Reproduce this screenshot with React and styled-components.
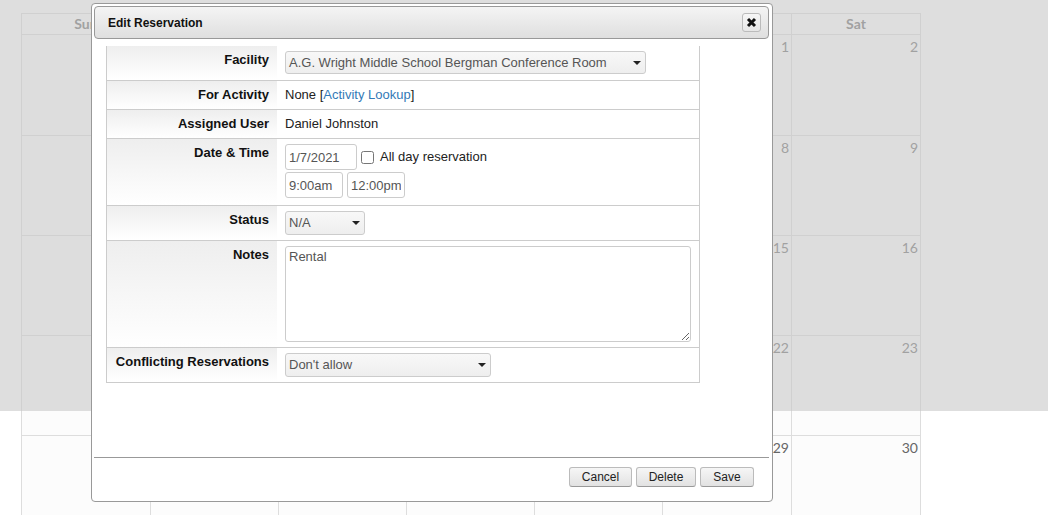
import React from "react";
import styled, { createGlobalStyle } from "styled-components";

const GlobalStyle = createGlobalStyle`
  html, body {
    margin: 0;
    height: 100%;
    overflow: hidden;
    background: #fff;
  }
`;

const Page = styled.div`
  position: relative;
  height: 515px;
  padding: 13px 0 0 21px;
  box-sizing: border-box;
  overflow: hidden;
  font-family: Lato, "Liberation Sans", sans-serif;
`;

const Calendar = styled.div`
  display: grid;
  grid-template-columns: 129px 128px 128px 128px 128px 129px 129px;
  grid-template-rows: 21px 101px;
  grid-auto-rows: 100px;
  width: 900px;
  border-top: 1px solid #ddd;
  border-left: 1px solid #ddd;
  box-sizing: border-box;
`;

const DayName = styled.div`
  line-height: 20px;
  text-align: center;
  font-size: 14px;
  font-weight: 700;
  color: #666;
  border-right: 1px solid #ddd;
  border-bottom: 1px solid #ddd;
`;

const Day = styled.div`
  padding: 3px 2px 0 0;
  text-align: right;
  font-size: 14px;
  line-height: 18px;
  color: #666;
  background: #fcfcfc;
  border-right: 1px solid #ddd;
  border-bottom: 1px solid #ddd;
`;

const Overlay = styled.div`
  position: absolute;
  top: 0;
  left: 0;
  width: 100%;
  height: 411px;
  background: rgba(200, 200, 200, 0.6);
`;

const Dialog = styled.div`
  position: absolute;
  top: 3px;
  left: 91px;
  width: 682px;
  height: 499px;
  box-sizing: border-box;
  padding: 2px 3px 2px 2px;
  display: flex;
  flex-direction: column;
  background: #fff;
  border: 1px solid #999;
  border-radius: 4px;
  font-family: "Liberation Sans", Arial, sans-serif;
`;

const TitleBar = styled.div`
  flex: none;
  height: 33px;
  box-sizing: border-box;
  display: flex;
  align-items: center;
  justify-content: space-between;
  padding: 0 7px 0 13px;
  border: 1px solid #999;
  border-radius: 4px;
  background: linear-gradient(#f4f4f4, #dfdfdf);
`;

const Title = styled.span`
  font-size: 12px;
  font-weight: 700;
  color: #111;
`;

const CloseButton = styled.button`
  width: 19px;
  height: 19px;
  padding: 0;
  display: flex;
  align-items: center;
  justify-content: center;
  background: linear-gradient(#f6f6f6, #e6e6e6);
  border: 1px solid #bbb;
  border-radius: 3px;
`;

const Content = styled.div`
  flex: 1;
  min-height: 0;
  padding: 7px 0 0 12px;
  overflow: hidden;
`;

const FormTable = styled.div`
  width: 594px;
  box-sizing: border-box;
  border-left: 1px solid #ccc;
  border-right: 1px solid #ccc;
  border-bottom: 1px solid #ccc;
`;

const Row = styled.div`
  display: grid;
  grid-template-columns: 170px 1fr;
  border-bottom: 1px solid #ccc;
  &:last-child {
    border-bottom: 0;
  }
`;

const Label = styled.div`
  padding: 6px 8px 0 0;
  text-align: right;
  font-size: 13px;
  line-height: 15px;
  font-weight: 700;
  color: #111;
  background: linear-gradient(#eee, #fff);
`;

const Field = styled.div`
  padding: ${(p) => p.$pad || "6px 8px"};
  font-size: 13px;
  line-height: 16px;
  color: #222;
`;

const Select = styled.div`
  width: ${(p) => p.$w}px;
  height: ${(p) => p.$h || 24}px;
  box-sizing: border-box;
  padding: 0 4px 0 3px;
  display: flex;
  align-items: center;
  justify-content: space-between;
  font-size: 13px;
  color: #555;
  background: linear-gradient(#f8f8f8, #eee);
  border: 1px solid #ccc;
  border-radius: 3px;
`;

const Caret = styled.span`
  width: 0;
  height: 0;
  border-left: 4px solid transparent;
  border-right: 4px solid transparent;
  border-top: 4px solid #222;
`;

const InputRow = styled.div`
  display: flex;
  align-items: center;
  gap: 4px;
  & + & {
    margin-top: 2px;
  }
`;

const Input = styled.input`
  width: ${(p) => p.$w}px;
  height: 26px;
  box-sizing: border-box;
  padding: 0 3px;
  font: 13px "Liberation Sans", Arial, sans-serif;
  color: #555;
  background: #fff;
  border: 1px solid #ccc;
  border-radius: 3px;
`;

const Check = styled.input`
  width: 13px;
  height: 13px;
  margin: 0;
`;

const CheckLabel = styled.span`
  font-size: 13px;
  color: #222;
  margin-left: 2px;
`;

const Notes = styled.textarea`
  display: block;
  width: 406px;
  height: 96px;
  box-sizing: border-box;
  padding: 2px 3px;
  font: 13px "Liberation Sans", Arial, sans-serif;
  color: #555;
  border: 1px solid #ccc;
  border-radius: 3px;
`;

const LookupLink = styled.a`
  color: #337ab7;
  text-decoration: none;
`;

const Footer = styled.div`
  flex: none;
  height: 42px;
  box-sizing: border-box;
  display: flex;
  justify-content: flex-end;
  align-items: flex-start;
  gap: 4px;
  padding: 9px 15px 0 0;
  border-top: 1px solid #999;
`;

const Button = styled.button`
  width: ${(p) => p.$w}px;
  height: 20px;
  padding: 0;
  font: 12px "Liberation Sans", Arial, sans-serif;
  color: #222;
  background: linear-gradient(#f6f6f6, #e2e2e2);
  border: 1px solid #bbb;
  border-bottom-color: #999;
  border-radius: 3px;
`;

const dayNames = ["Sun", "Mon", "Tue", "Wed", "Thu", "Fri", "Sat"];
const days = [
  "", "", "", "", "", 1, 2,
  3, 4, 5, 6, 7, 8, 9,
  10, 11, 12, 13, 14, 15, 16,
  17, 18, 19, 20, 21, 22, 23,
  24, 25, 26, 27, 28, 29, 30,
];

export default function App() {
  return (
    <>
      <GlobalStyle />
      <Page>
        <Calendar>
          {dayNames.map((d) => (
            <DayName key={d}>{d}</DayName>
          ))}
          {days.map((d, i) => (
            <Day key={i}>{d}</Day>
          ))}
        </Calendar>
        <Overlay />
        <Dialog>
          <TitleBar>
            <Title>Edit Reservation</Title>
            <CloseButton aria-label="Close">
              <svg width="11" height="11" viewBox="0 0 11 11">
                <path d="M2 2l7 7M9 2l-7 7" stroke="#111" strokeWidth="3" />
              </svg>
            </CloseButton>
          </TitleBar>
          <Content>
            <FormTable>
              <Row>
                <Label>Facility</Label>
                <Field $pad="5px 8px 6px">
                  <Select $w={361} $h={23}>
                    A.G. Wright Middle School Bergman Conference Room
                    <Caret />
                  </Select>
                </Field>
              </Row>
              <Row>
                <Label>For Activity</Label>
                <Field>
                  None [<LookupLink href="#">Activity Lookup</LookupLink>]
                </Field>
              </Row>
              <Row>
                <Label>Assigned User</Label>
                <Field>Daniel Johnston</Field>
              </Row>
              <Row>
                <Label>Date &amp; Time</Label>
                <Field $pad="5px 8px 7px">
                  <InputRow>
                    <Input $w={72} defaultValue="1/7/2021" />
                    <Check type="checkbox" />
                    <CheckLabel>All day reservation</CheckLabel>
                  </InputRow>
                  <InputRow>
                    <Input $w={58} defaultValue="9:00am" />
                    <Input $w={58} defaultValue="12:00pm" />
                  </InputRow>
                </Field>
              </Row>
              <Row>
                <Label>Status</Label>
                <Field $pad="5px 8px">
                  <Select $w={80}>
                    N/A
                    <Caret />
                  </Select>
                </Field>
              </Row>
              <Row>
                <Label>Notes</Label>
                <Field $pad="5px 8px">
                  <Notes defaultValue="Rental" />
                </Field>
              </Row>
              <Row>
                <Label>Conflicting Reservations</Label>
                <Field $pad="5px 8px">
                  <Select $w={206}>
                    Don't allow
                    <Caret />
                  </Select>
                </Field>
              </Row>
            </FormTable>
          </Content>
          <Footer>
            <Button $w={63}>Cancel</Button>
            <Button $w={60}>Delete</Button>
            <Button $w={54}>Save</Button>
          </Footer>
        </Dialog>
      </Page>
    </>
  );
}
